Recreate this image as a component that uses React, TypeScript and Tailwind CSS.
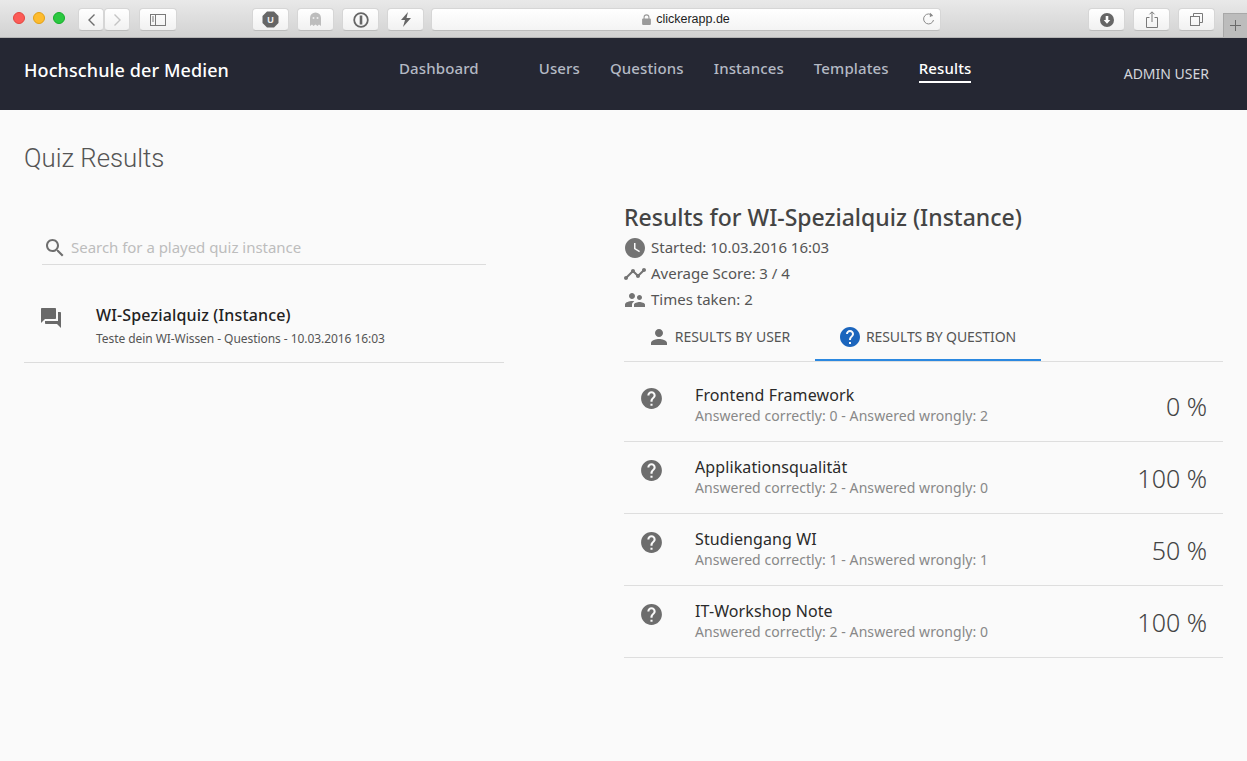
import React from "react";

const P = {
  forum: "M21 6h-2v9H6v2c0 .55.45 1 1 1h11l4 4V7c0-.55-.45-1-1-1zm-4 6V3c0-.55-.45-1-1-1H3c-.55 0-1 .45-1 1v14l4-4h10c.55 0 1-.45 1-1z",
  clock: "M12 2C6.5 2 2 6.5 2 12s4.5 10 10 10 10-4.5 10-10S17.5 2 12 2zm4.2 14.2L11 13V7h1.5v5.2l4.5 2.7-.8 1.3z",
  timeline: "M23 8c0 1.1-.9 2-2 2-.18 0-.35-.02-.51-.07l-3.56 3.55c.05.16.07.34.07.52 0 1.1-.9 2-2 2s-2-.9-2-2c0-.18.02-.36.07-.52l-2.55-2.55c-.16.05-.34.07-.52.07s-.36-.02-.52-.07l-4.55 4.56c.05.16.07.33.07.51 0 1.1-.9 2-2 2s-2-.9-2-2 .9-2 2-2c.18 0 .35.02.51.07l4.56-4.55C8.02 9.36 8 9.18 8 9c0-1.1.9-2 2-2s2 .9 2 2c0 .18-.02.36-.07.52l2.55 2.55c.16-.05.34-.07.52-.07s.36.02.52.07l3.55-3.56C19.02 8.35 19 8.18 19 8c0-1.1.9-2 2-2s2 .9 2 2z",
  people: "M16.5 12c1.38 0 2.49-1.12 2.49-2.5S17.88 7 16.5 7C15.12 7 14 8.12 14 9.5s1.12 2.5 2.5 2.5zM9 11c1.66 0 2.99-1.34 2.99-3S10.66 5 9 5C7.34 5 6 6.34 6 8s1.34 3 3 3zm7.5 3c-1.83 0-5.5.92-5.5 2.75V19h11v-2.25c0-1.83-3.67-2.75-5.5-2.75zM9 13c-2.33 0-7 1.17-7 3.5V19h7v-2.25c0-.85.33-2.34 2.37-3.47C10.5 13.1 9.66 13 9 13z",
  person: "M12 12c2.21 0 4-1.79 4-4s-1.79-4-4-4-4 1.79-4 4 1.79 4 4 4zm0 2c-2.67 0-8 1.34-8 4v2h16v-2c0-2.66-5.33-4-8-4z",
  help: "M12 2C6.48 2 2 6.48 2 12s4.48 10 10 10 10-4.48 10-10S17.52 2 12 2zm1 17h-2v-2h2v2zm2.07-7.75l-.9.92C13.45 12.9 13 13.5 13 15h-2v-.5c0-1.1.45-2.1 1.17-2.83l1.24-1.26c.37-.36.59-.86.59-1.41 0-1.1-.9-2-2-2s-2 .9-2 2H8c0-2.21 1.79-4 4-4s4 1.79 4 4c0 .88-.36 1.68-.93 2.25z",
  search: "M15.5 14h-.79l-.28-.27C15.41 12.59 16 11.11 16 9.5 16 5.91 13.09 3 9.5 3S3 5.91 3 9.5 5.91 16 9.5 16c1.61 0 3.09-.59 4.23-1.57l.27.28v.79l5 4.99L20.49 19l-4.99-5zm-6 0C7.01 14 5 11.99 5 9.5S7.01 5 9.5 5 14 7.01 14 9.5 11.99 14 9.5 14z",
};

function Icon({ d, className }: { d: string; className: string }) {
  return (
    <svg viewBox="0 0 24 24" className={className} fill="currentColor">
      <path d={d} />
    </svg>
  );
}

function Btn({ children, className = "w-[37px]" }: { children?: React.ReactNode; className?: string }) {
  return (
    <div className={`h-[23px] ${className} shrink-0 rounded-[4px] bg-gradient-to-b from-white to-[#f1f1f1] border border-[#d6d6d6] border-b-[#bdbdbd] flex items-center justify-center text-[#6e6e6e]`}>
      {children}
    </div>
  );
}

function Toolbar() {
  return (
    <div className="h-[38px] shrink-0 relative flex items-start pt-[8px] pl-[13px] bg-gradient-to-b from-[#e9e9e9] to-[#d2d2d2] border-b border-[#b4b4b4]">
      <div className="flex gap-[8px] mt-[4px] w-[65px] shrink-0">
        <div className="w-3 h-3 rounded-full bg-[#fc5b57] border border-[#e2463f]" />
        <div className="w-3 h-3 rounded-full bg-[#fdbb2e] border border-[#e1a116]" />
        <div className="w-3 h-3 rounded-full bg-[#2bc840] border border-[#14ae2a]" />
      </div>
      <Btn className="w-[26px]">
        <svg width="9" height="14" viewBox="0 0 9 14" fill="none" stroke="#6e6e6e" strokeWidth="1.4"><path d="M7.5 1.5 2 7l5.5 5.5" /></svg>
      </Btn>
      <Btn className="w-[26px]">
        <svg width="9" height="14" viewBox="0 0 9 14" fill="none" stroke="#c4c4c4" strokeWidth="1.4"><path d="M1.5 1.5 7 7l-5.5 5.5" /></svg>
      </Btn>
      <Btn className="w-[38px] ml-[9px]">
        <svg width="16" height="12" viewBox="0 0 16 12" fill="none" stroke="#7a7a7a"><rect x=".5" y=".5" width="15" height="11" /><path d="M5.5 .5v11M2 3h2M2 5h2M2 7h2" /></svg>
      </Btn>
      <div className="flex gap-[8px] ml-[75px]">
        <Btn>
          <svg width="17" height="17" viewBox="0 0 17 17"><path d="M5 .5h7L16.500 5v7L12 16.500H5L.5 12V5z" fill="#666" /><text x="8.500" y="12" textAnchor="middle" fontSize="9" fontWeight="700" fill="#eee" fontFamily="Liberation Sans, sans-serif">U</text></svg>
        </Btn>
        <Btn>
          <svg width="13" height="15" viewBox="0 0 13 15"><path d="M1 14V6a5.500 5.500 0 0 1 11 0v8l-2-1.500L8.500 14l-2-1.500-2 1.500L3 12.500z" fill="#bdbdbd" /><circle cx="4.500" cy="6" r="1" fill="#eee" /><circle cx="8.500" cy="6" r="1" fill="#eee" /></svg>
        </Btn>
        <Btn>
          <svg width="16" height="16" viewBox="0 0 16 16"><circle cx="8" cy="8" r="6.800" fill="none" stroke="#666" strokeWidth="1.800" /><path d="M6.700 3.500h2.600v9H6.700z" fill="#666" /></svg>
        </Btn>
        <Btn>
          <svg width="12" height="15" viewBox="0 0 12 15"><path d="M8 0 1 8h4l-2 7 8-9H6.500z" fill="#666" /></svg>
        </Btn>
      </div>
      <div className="ml-[7px] w-[510px] h-[23px] shrink-0 rounded-[4px] bg-gradient-to-b from-white to-[#f4f4f4] border border-[#d6d6d6] border-b-[#bdbdbd] flex items-center justify-center relative">
        <svg width="9" height="11" viewBox="0 0 8 10" className="mr-[5px]"><rect y="4" width="8" height="6" rx="1" fill="#9a9a9a" /><path d="M1.800 4.500V3a2.200 2.200 0 0 1 4.400 0v1.500" fill="none" stroke="#9a9a9a" /></svg>
        <span className="text-[12.5px] leading-none text-[#1e1e1e] font-['Liberation_Sans',sans-serif]">clickerapp.de</span>
        <svg width="13" height="14" viewBox="0 0 13 14" fill="none" stroke="#8a8a8a" className="absolute right-[5px] top-[3px]"><path d="M10.500 3.800A5 5 0 1 0 11.500 8" /><path d="M8 .8l3 2.600-3.200 1.800" fill="#8a8a8a" stroke="none" /></svg>
      </div>
      <div className="flex gap-[8px] ml-[147px]">
        <Btn>
          <svg width="14" height="14" viewBox="0 0 14 14"><circle cx="7" cy="7" r="7" fill="#666" /><path d="M5.700 3h2.600v4h2L7 10.800 3.700 7h2z" fill="#fff" /></svg>
        </Btn>
        <Btn>
          <svg width="12" height="17" viewBox="0 0 12 17" fill="none" stroke="#7a7a7a"><path d="M3.500 6.500h-3v10h11v-10h-3M6 11V1M3.500 3.300 6 .8l2.500 2.500" /></svg>
        </Btn>
        <Btn>
          <svg width="13" height="13" viewBox="0 0 13 13" fill="none" stroke="#7a7a7a"><rect x=".5" y="3.500" width="9" height="9" /><path d="M3.500 3.500v-3h9v9h-3" /></svg>
        </Btn>
      </div>
      <div className="absolute right-0 top-[13px] bottom-0 w-[24px] bg-[#bcbcbc] border-l border-t border-[#a8a8a8] flex items-center justify-center">
        <svg width="11" height="11" viewBox="0 0 11 11" stroke="#6a6a6a"><path d="M5.500 0v11M0 5.500h11" /></svg>
      </div>
    </div>
  );
}

function NavItem({ label, active, className = "" }: { label: string; active?: boolean; className?: string }) {
  return (
    <div className={`h-[26px] text-[15px] leading-[22px] tracking-[0.12px] font-medium border-b-2 ${active ? "text-white border-white" : "text-[#b4b9c4] border-transparent"} ${className}`}>
      {label}
    </div>
  );
}

function Header() {
  return (
    <header className="h-[72px] shrink-0 bg-[#252733] flex pl-[24px] pr-[38px]">
      <div className="w-[375px] shrink-0 pt-[20px] text-[18px] leading-[25px] tracking-[0.1px] font-medium text-white">Hochschule der Medien</div>
      <nav className="flex pt-[19px] gap-[30px]">
        <NavItem label="Dashboard" className="mr-[30px]" />
        <NavItem label="Users" />
        <NavItem label="Questions" />
        <NavItem label="Instances" />
        <NavItem label="Templates" />
        <NavItem label="Results" active />
      </nav>
      <div className="ml-auto pt-[26px] text-[14px] leading-[20px] text-[#d4d6dc]">ADMIN USER</div>
    </header>
  );
}

const stats = [
  { d: P.clock, t: "Started: 10.03.2016 16:03" },
  { d: P.timeline, t: "Average Score: 3 / 4" },
  { d: P.people, t: "Times taken: 2" },
];

const rows = [
  { t: "Frontend Framework", s: "Answered correctly: 0 - Answered wrongly: 2", p: "0 %" },
  { t: "Applikationsqualität", s: "Answered correctly: 2 - Answered wrongly: 0", p: "100 %" },
  { t: "Studiengang WI", s: "Answered correctly: 1 - Answered wrongly: 1", p: "50 %" },
  { t: "IT-Workshop Note", s: "Answered correctly: 2 - Answered wrongly: 0", p: "100 %" },
];

export default function App() {
  return (
    <div className="h-[761px] w-[1247px] overflow-hidden flex flex-col bg-[#fafafa] font-['Noto_Sans','Open_Sans',sans-serif]">
      <Toolbar />
      <Header />
      <main className="flex-1 px-[24px]">
        <h1 className="mt-[32px] h-[33px] text-[25.8px] leading-[33px] text-[#555] font-light font-['Roboto',sans-serif]">Quiz Results</h1>
        <div className="flex mt-[27px]">
          <section className="w-[480px] shrink-0 pt-[28px]">
            <div className="ml-[18px] w-[444px] h-[35px] border-b border-[#dcdcdc] flex items-start pt-[6px]">
              <Icon d={P.search} className="w-[24px] h-[24px] ml-[1px] text-[#6f6f6f]" />
              <span className="ml-[4px] text-[15px] leading-[22px] tracking-[-0.03px] text-[#bdbdbd]">Search for a played quiz instance</span>
            </div>
            <div className="h-[98px] border-b border-[#dcdcdc] flex items-start pl-[15px] pt-[38px]">
              <Icon d={P.forum} className="w-[24px] h-[24px] mt-[3px] text-[#696969]" />
              <div className="ml-[33px] mt-[1px]">
                <div className="text-[16px] leading-[22px] tracking-[0.15px] font-medium text-[#222]">WI-Spezialquiz (Instance)</div>
                <div className="mt-[4px] text-[12px] leading-[17px] tracking-[-0.06px] text-[#555]">Teste dein WI-Wissen - Questions - 10.03.2016 16:03</div>
              </div>
            </div>
          </section>
          <section className="ml-[120px] flex-1">
            <h2 className="text-[23px] leading-[30px] font-medium text-[#444]">Results for WI-Spezialquiz (Instance)</h2>
            <div className="mt-[2px]">
              {stats.map((s) => (
                <div key={s.t} className="h-[26px] flex items-center text-[15px] text-[#555]">
                  <Icon d={s.d} className="w-[24px] h-[24px] -ml-[1px] mr-[4px] mt-[2px] text-[#747474]" />
                  {s.t}
                </div>
              ))}
            </div>
            <div className="flex h-[50px] border-b border-[#dedede]">
              <div className="w-[191px] h-[49px] flex items-center justify-center pr-[2px] text-[14px] text-[#555]">
                <Icon d={P.person} className="w-[24px] h-[24px] mr-[4px] text-[#6f6f6f]" />
                RESULTS BY USER
              </div>
              <div className="w-[226px] h-[49px] pt-[2px] pr-[2px] flex items-center justify-center border-b-2 border-[#2b88e0] text-[14px] tracking-[-0.1px] text-[#555]">
                <Icon d={P.help} className="w-[24px] h-[24px] mr-[4px] text-[#1b65bd]" />
                RESULTS BY QUESTION
              </div>
            </div>
            <div className="pt-[8px]">
              {rows.map((r) => (
                <div key={r.t} className="h-[72px] flex border-b border-[#dedede] pl-[15px] pr-[16px] pt-[14px] items-start">
                  <Icon d={P.help} className="w-[25px] h-[25px] mt-[2px] text-[#6d6d6d]" />
                  <div className="ml-[31px] flex-1">
                    <div className="text-[16px] leading-[22px] tracking-[0.1px] text-[#2a2a2a]">{r.t}</div>
                    <div className="text-[14px] leading-[20px] tracking-[0.07px] text-[#888]">{r.s}</div>
                  </div>
                  <div className="mt-[6px] text-[25px] leading-[32px] font-light text-[#444]">{r.p}</div>
                </div>
              ))}
            </div>
          </section>
        </div>
      </main>
    </div>
  );
}
